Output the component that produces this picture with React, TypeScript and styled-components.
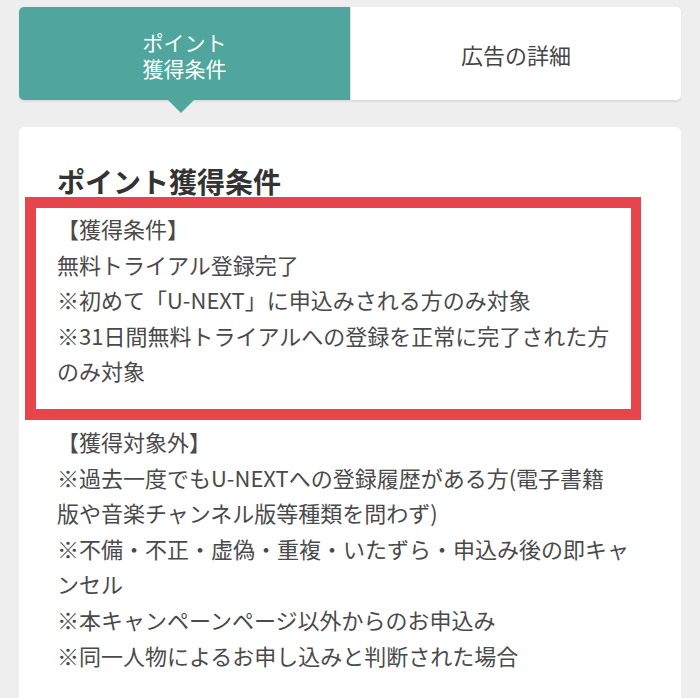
import React from "react";
import styled, { createGlobalStyle } from "styled-components";

const GlobalStyle = createGlobalStyle`
  html, body {
    margin: 0;
    padding: 0;
    background: #eeeeee;
  }
  body {
    font-family: "Noto Sans CJK JP", "Noto Sans", sans-serif;
  }
`;

const Page = styled.div`
  box-sizing: border-box;
  height: 698px;
  overflow: hidden;
  padding: 7px 19px 0;
`;

const Tabs = styled.div`
  display: grid;
  grid-template-columns: 331px 1fr;
  height: 93px;
`;

const Tab = styled.div<{ $active?: boolean }>`
  position: relative;
  display: flex;
  align-items: center;
  justify-content: center;
  text-align: center;
  font-size: ${(p) => (p.$active ? "21px" : "22px")};
  line-height: 26px;
  background: ${(p) => (p.$active ? "#50a69d" : "#ffffff")};
  color: ${(p) => (p.$active ? "#ffffff" : "#454545")};
  border-radius: ${(p) => (p.$active ? "5px 0 0 5px" : "0 5px 5px 0")};
  box-shadow: 0 2px 2px rgba(0, 0, 0, 0.07);
  ${(p) => (p.$active ? "" : "border-left: 1px solid #e2e2e2;")}

  &::after {
    content: "";
    display: ${(p) => (p.$active ? "block" : "none")};
    position: absolute;
    left: 149px;
    top: 100%;
    width: 0;
    height: 0;
    border-left: 13px solid transparent;
    border-right: 13px solid transparent;
    border-top: 13px solid #50a69d;
  }
`;

const TabLines = styled.span`
  display: flex;
  flex-direction: column;
  align-items: center;
  padding-top: 2px;
`;

const Card = styled.section`
  margin-top: 27px;
  background: #ffffff;
  border-radius: 6px;
  padding: 37px 38px 40px 38px;
`;

const Heading = styled.h2`
  margin: 0;
  font-size: 28px;
  line-height: 34px;
  font-weight: 700;
  color: #333333;
`;

const Highlight = styled.div`
  box-sizing: border-box;
  width: 616px;
  margin: -1px 0 0 -32px;
  border: 11px solid #e8444c;
  border-right-width: 10px;
  padding: 3px 0 20px 21px;
`;

const Text = styled.p<{ $gap?: number }>`
  margin: ${(p) => p.$gap ?? 0}px 0 0;
  font-size: 22px;
  line-height: 35.6px;
  color: #4a4a4a;
  white-space: nowrap;
`;

export default function App() {
  return (
    <>
      <GlobalStyle />
      <Page>
        <Tabs>
          <Tab $active>
            <TabLines>
              <span>ポイント</span>
              <span>獲得条件</span>
            </TabLines>
          </Tab>
          <Tab>広告の詳細</Tab>
        </Tabs>
        <Card>
          <Heading>ポイント獲得条件</Heading>
          <Highlight>
            <Text>
              【獲得条件】
              <br />
              無料トライアル登録完了
              <br />
              ※初めて「U-NEXT」に申込みされる方のみ対象
              <br />
              ※31日間無料トライアルへの登録を正常に完了された方
              <br />
              のみ対象
            </Text>
          </Highlight>
          <Text $gap={4}>
            【獲得対象外】
            <br />
            ※過去一度でもU-NEXTへの登録履歴がある方(電子書籍
            <br />
            版や音楽チャンネル版等種類を問わず)
            <br />
            ※不備・不正・虚偽・重複・いたずら・申込み後の即キャ
            <br />
            ンセル
            <br />
            ※本キャンペーンページ以外からのお申込み
            <br />
            ※同一人物によるお申し込みと判断された場合
          </Text>
        </Card>
      </Page>
    </>
  );
}
